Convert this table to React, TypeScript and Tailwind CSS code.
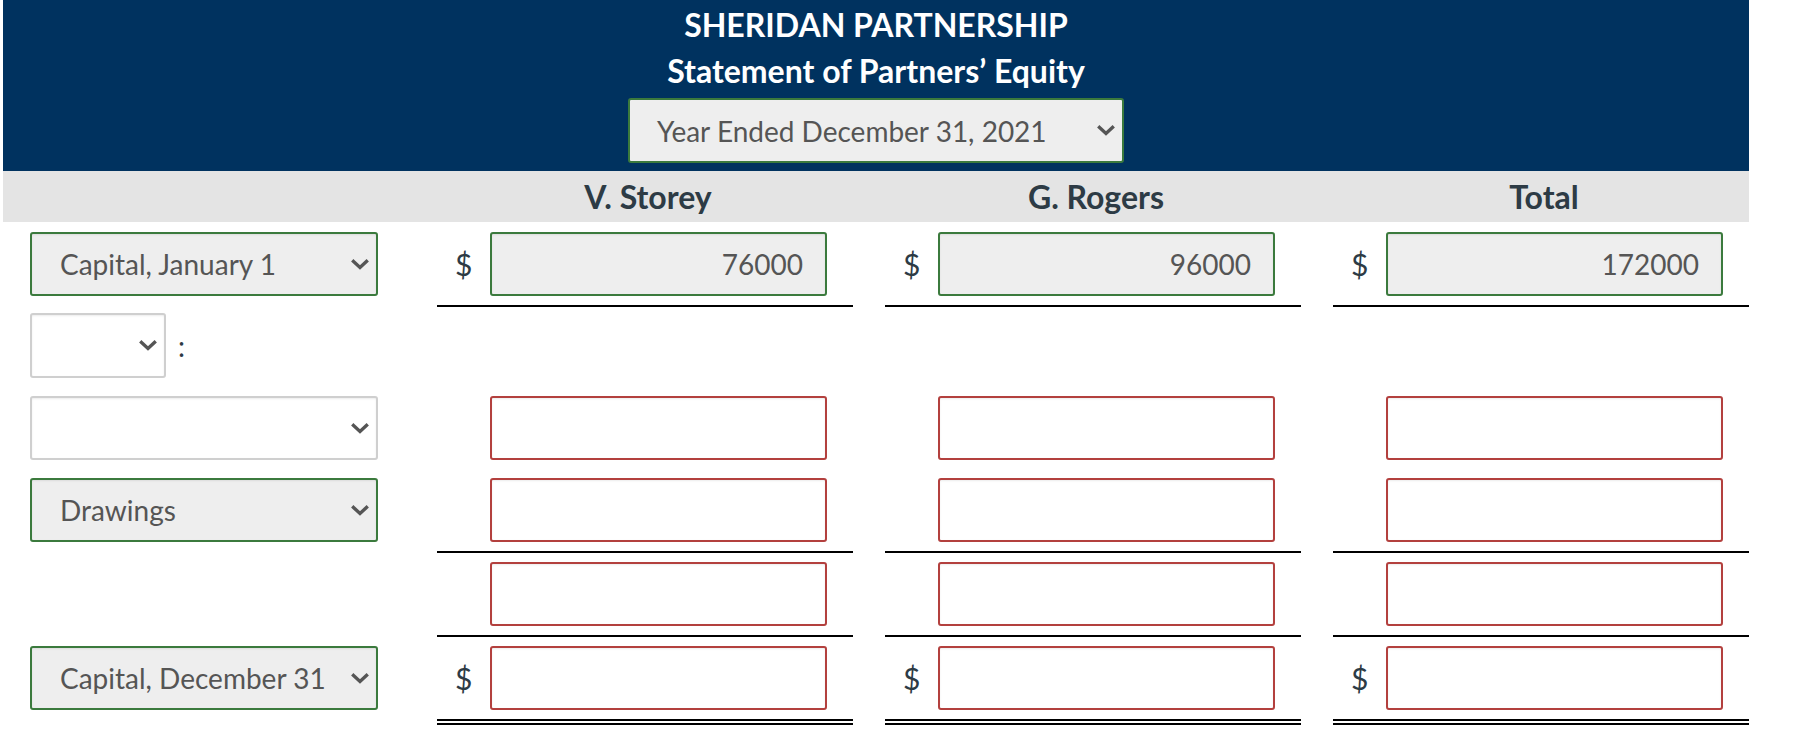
import * as React from "react";

// Partners' equity worksheet
function Chevron({ className = "" }: { className?: string }) {
  return (
    <svg className={className} width="18" height="11" viewBox="0 0 18 11" fill="none">
      <polyline points="2.5,2.5 9,8.5 15.5,2.5" stroke="#555555" strokeWidth="3.4" strokeLinecap="square" />
    </svg>
  );
}

function SelectBox({
  label,
  filled,
  width = "w-[348px]",
  height = "h-[64px]",
}: {
  label?: string;
  filled?: boolean;
  width?: string;
  height?: string;
}) {
  return (
    <div
      className={`${width} ${height} rounded-[3px] border-2 flex items-center justify-between pl-[28px] pr-[7px] shadow-[inset_0_1px_2px_rgba(0,0,0,0.08)] ${
        filled ? "bg-[#eeeeee] border-[#3b7a3d]" : "bg-white border-[#cfcfcf]"
      }`}
    >
      <span className="text-[28px] text-[#555555] whitespace-nowrap">{label ?? ""}</span>
      <Chevron />
    </div>
  );
}

function Amount({
  value,
  dollar,
  line,
}: {
  value?: string;
  dollar?: boolean;
  line?: "single" | "double";
}) {
  const border =
    line === "single"
      ? "border-b-2 border-black"
      : line === "double"
      ? "border-b-[6px] border-double border-black"
      : "";
  return (
    <div className={`flex items-center pt-[9px] pb-[9px] ${border}`}>
      <div className="w-[53px] pl-[18px] text-[30px] text-[#2d3b45]">{dollar ? "$" : ""}</div>
      <div
        className={`w-[337px] h-[64px] rounded-[3px] border-2 flex items-center justify-end pr-[22px] text-[28px] text-[#555555] shadow-[inset_0_1px_2px_rgba(0,0,0,0.08)] ${
          value ? "bg-[#eeeeee] border-[#3b7a3d]" : "bg-white border-[#b3403e]"
        }`}
      >
        {value ?? ""}
      </div>
    </div>
  );
}

const cols = "grid grid-cols-[405px_416px_416px_416px] gap-x-[32px]";

export default function App() {
  return (
    <div className="w-[1811px] min-h-[741px] bg-white font-['Lato','Noto_Sans',sans-serif]">
      <div className="w-[1749px]">
        <div className="ml-[3px] bg-[#00325f] flex flex-col items-center pt-[2px] pb-[8px]">
          <div className="text-[32px] leading-[46px] font-bold text-white">SHERIDAN PARTNERSHIP</div>
          <div className="text-[32px] leading-[46px] font-bold text-white">Statement of Partners’ Equity</div>
          <div className="mt-[4px] w-[496px] h-[65px] rounded-[3px] border-2 border-[#3b7a3d] bg-[#eeeeee] flex items-center justify-between pl-[27px] pr-[7px]">
            <span className="text-[28px] text-[#555555]">Year Ended December 31, 2021</span>
            <Chevron />
          </div>
        </div>

        <div className={`ml-[3px] h-[51px] bg-[#e4e4e4] ${cols} items-center`}>
          <div />
          <div className="text-center text-[32px] leading-[51px] font-bold text-[#2d3b45]">V. Storey</div>
          <div className="text-center text-[32px] leading-[51px] font-bold text-[#2d3b45]">G. Rogers</div>
          <div className="text-center text-[32px] leading-[51px] font-bold text-[#2d3b45]">Total</div>
        </div>

        {/* Capital, January 1 */}
        <div className={`${cols} items-start pt-[1px]`}>
          <div className="pt-[9px] pl-[30px]">
            <SelectBox label="Capital, January 1" filled />
          </div>
          <Amount value="76000" dollar line="single" />
          <Amount value="96000" dollar line="single" />
          <Amount value="172000" dollar line="single" />
        </div>

        {/* add/less heading */}
        <div className="flex items-center pt-[6px] pb-[8px] pl-[30px]">
          <SelectBox width="w-[136px]" height="h-[65px]" />
          <span className="ml-[12px] text-[28px] text-[#2d3b45]">:</span>
        </div>

        <div className={`${cols} items-start pt-[1px]`}>
          <div className="pt-[9px] pl-[30px]">
            <SelectBox />
          </div>
          <Amount />
          <Amount />
          <Amount />
        </div>

        <div className={`${cols} items-start`}>
          <div className="pt-[9px] pl-[30px]">
            <SelectBox label="Drawings" filled />
          </div>
          <Amount line="single" />
          <Amount line="single" />
          <Amount line="single" />
        </div>

        <div className={`${cols} items-start`}>
          <div />
          <Amount line="single" />
          <Amount line="single" />
          <Amount line="single" />
        </div>

        <div className={`${cols} items-start`}>
          <div className="pt-[9px] pl-[30px]">
            <SelectBox label="Capital, December 31" filled />
          </div>
          <Amount dollar line="double" />
          <Amount dollar line="double" />
          <Amount dollar line="double" />
        </div>
      </div>
    </div>
  );
}
